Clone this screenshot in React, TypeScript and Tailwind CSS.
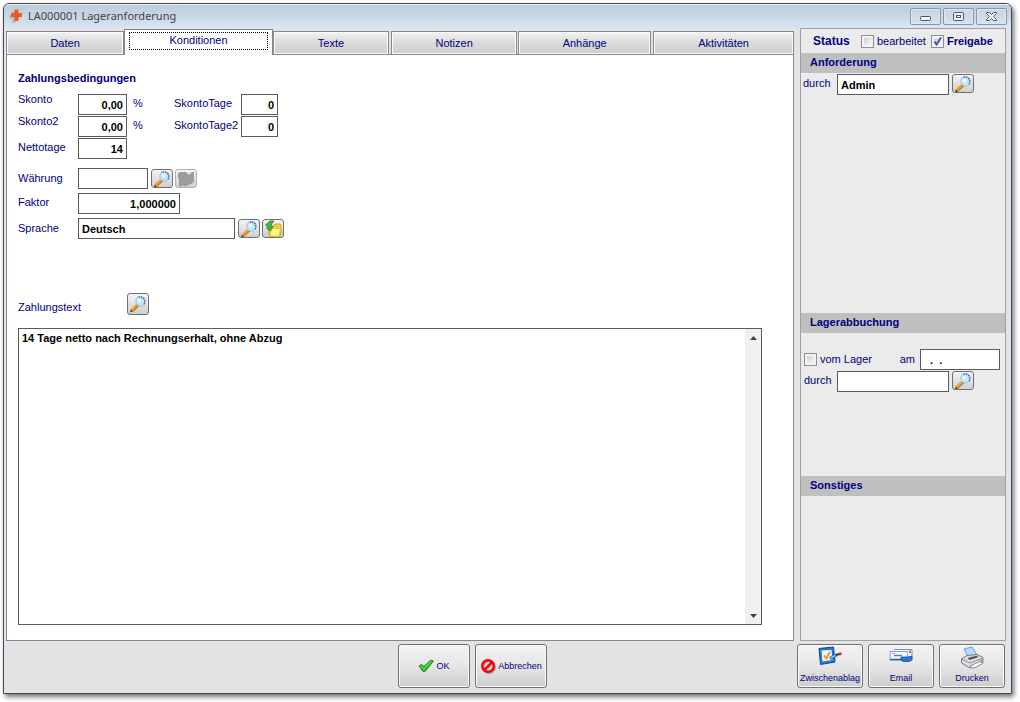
import { useState } from 'react'
import type { ReactNode } from 'react'
import clsx from 'clsx'

const tabs = [
  { id: 'daten', label: 'Daten', className: 'grow-[118]' },
  { id: 'konditionen', label: 'Konditionen', className: 'grow-[149]' },
  { id: 'texte', label: 'Texte', className: 'mr-0.5 grow-[116]' },
  { id: 'notizen', label: 'Notizen', className: 'mr-px grow-[126]' },
  { id: 'anhaenge', label: 'Anhänge', className: 'mr-0.5 grow-[133]' },
  { id: 'aktivitaeten', label: 'Aktivitäten', className: 'grow-[141]' },
]

const fieldClass = 'h-[21px] border border-[#5a5a5a] bg-white px-[3px] text-[11px] font-bold text-black outline-none'

// Icons
const SearchIcon = () => (
  <svg width="18" height="18" viewBox="0 0 18 18">
    <path d="M3.500 15.500 9 10.500" stroke="#8d6a3c" strokeWidth="2.400" strokeLinecap="round" />
    <path d="M2.800 15 8.300 9.800" stroke="#f89d1e" strokeWidth="2.600" strokeLinecap="round" />
    <path d="M1.500 15.500 3 16.800" stroke="#3a2008" strokeWidth="1.400" />
    <circle cx="11.500" cy="6.200" r="4.700" fill="#bfe8fb" stroke="#a9c6e6" strokeWidth="1.200" />
    <path d="M9.500 2.200a4.700 4.700 0 0 1 5.500 7" fill="none" stroke="#3a4c96" strokeWidth="1.200" strokeDasharray="1.500 1" />
    <circle cx="10.500" cy="5.500" r="2" fill="#e9f9ff" />
  </svg>
)

const DisabledFolderIcon = () => (
  <svg width="18" height="18" viewBox="0 0 18 18">
    <path d="M1 3l2-1h6l1 1h3l1-1h3v9l-1 2-2 1-3 1-1 1H5l-2 1-1-2V9L1 8z" fill="#9c9c9c" />
    <path d="M10 2.500 11 4h2l1-1.500" fill="none" stroke="#efefef" />
  </svg>
)

const FolderIcon = () => (
  <svg width="18" height="18" viewBox="0 0 18 18">
    <path d="M6 6h4l1-2h4.500l1.500 1v10l-2 1.500H5.500L4 12z" fill="#f4cf3c" stroke="#c09a1a" strokeWidth=".8" />
    <path d="M6 16 7.500 8.500h9L15 16.500z" fill="#fff389" stroke="#e0bc2e" strokeWidth=".8" />
    <path d="M1.500 5 6 1h4L8 3.500 6.500 6l2.500.5L6 11 2.500 8 4 6.500z" fill="#43bb3c" stroke="#1c7d22" strokeWidth=".8" />
  </svg>
)

const CheckIcon = () => (
  <svg width="16" height="14" viewBox="0 0 16 14" className="shrink-0">
    <path d="M1 7 3.500 5.500 6 7.500 12.500 1.200 15 1.500v1.200L7 12.500H5z" fill="#2fb42b" stroke="#1d8f20" />
    <path d="M2.500 7 6 10l7-7.500" fill="none" stroke="#5dd24d" strokeWidth="1.400" />
  </svg>
)

const CancelIcon = () => (
  <svg width="16" height="16" viewBox="0 0 16 16" className="shrink-0">
    <circle cx="9" cy="9" r="5.800" fill="none" stroke="#999" strokeWidth="2.200" />
    <path d="M5 13 13 5" stroke="#999" strokeWidth="2" />
    <circle cx="8" cy="8" r="5.800" fill="none" stroke="#f00" strokeWidth="2.400" />
    <path d="M4 12 12 4" stroke="#f00" strokeWidth="2.400" />
  </svg>
)

const ClipboardIcon = () => (
  <svg width="24" height="20" viewBox="0 0 24 20">
    <path d="M1 2.500 15.500 1l1.500 15L2.500 18.500z" fill="#2478d4" stroke="#0d4896" />
    <path d="M3.500 4.500 13.500 4l1 10L4.500 15.500z" fill="#f6f7fa" />
    <path d="M6 9.500 8.500 12.500 12 5.500" fill="none" stroke="#f0a31a" strokeWidth="2" />
    <path d="M12 12.500 18 9" stroke="#1c62b5" strokeWidth="3.200" />
    <path d="M12.500 12 18 9" stroke="#8cc6f4" strokeWidth="1.500" />
    <path d="M17.500 9.200 21 8" stroke="#223a70" strokeWidth="2.200" />
    <path d="M20.500 8.200 23.500 7.500" stroke="#c22f22" strokeWidth="2.600" />
  </svg>
)

const MailIcon = () => (
  <svg width="24" height="20" viewBox="0 0 24 20">
    <path d="M5 3.500h18v9h-4" fill="#eef4fb" stroke="#7c93b8" />
    <path d="M1 5.500h17.500v8.500H1z" fill="#f4f7fc" stroke="#8ba2c8" />
    <path d="M1 13.500h17.500" stroke="#2a5fb0" strokeWidth="1.500" />
    <path d="M5 9.500h8" stroke="#6d7f9d" strokeWidth="1.500" />
    <path d="M3 7.500h3" stroke="#9aabc4" />
    <path d="M12 11h7l4-1v4l-3 1.500h-6l-2-1.500z" fill="#2b79d6" stroke="#164a94" strokeWidth=".8" />
    <path d="M20 4.500h2V7h-2z" fill="#e3682a" />
  </svg>
)

const PrinterIcon = () => (
  <svg width="26" height="24" viewBox="0 0 26 24">
    <path d="M5 3 13 1l6 9.500-9 2z" fill="#b8dcfa" stroke="#6fa0d4" />
    <path d="M2.500 13 8 9.500 18 8.500l6 3v5L11 22l-8.500-5z" fill="#dedee1" stroke="#77777f" />
    <path d="M2.500 13 11 17l13-5" fill="none" stroke="#8d8d95" />
    <path d="M8.500 12 17.500 9.800l2 1.200-9 3z" fill="#4a4f5a" />
    <path d="M11 20 21 15.500l3 2L14 22.500z" fill="#fff" stroke="#85858d" />
    <path d="M21.500 14.500h1.500" stroke="#3ca23c" strokeWidth="1.500" />
  </svg>
)

const AppIcon = () => (
  <svg width="16" height="16" viewBox="0 0 16 16">
    <path d="M4 3h4v4h3v4H8v4H4v-4H1V7h3z" fill="#b9bcc0" />
    <path d="M6.500 1.500h4V5H14v4h-3.500v4h-4V9H3V5h3.500z" fill="#ea5b21" />
  </svg>
)

function IconButton({ label, disabled, tall, children }: {
  label: string
  disabled?: boolean
  tall?: boolean
  children: ReactNode
}) {
  return (
    <button
      type="button"
      aria-label={label}
      disabled={disabled}
      className={clsx(
        'flex w-[22px] shrink-0 items-center justify-center rounded-[3px] border bg-linear-to-b from-[#f4f4f4] to-[#cfcfcf]',
        tall ? 'h-[22px]' : 'h-[19px]',
        disabled ? 'border-[#b0b0b0]' : 'border-[#707070]'
      )}
    >
      {children}
    </button>
  )
}

function ActionButton({ label, icon, stacked }: { label: string; icon: ReactNode; stacked?: boolean }) {
  return (
    <button
      type="button"
      className={clsx(
        'flex h-11 shrink-0 items-center justify-center overflow-hidden rounded-[3px] border border-[#707070] bg-linear-to-b from-[#f3f3f3] from-0% via-[#e6e6e6] via-50% to-[#cdcdcd] text-[9px] leading-4 whitespace-nowrap shadow-[inset_0_0_0_1px_#fbfbfb]',
        stacked ? 'w-[66px] flex-col' : 'w-[72px] gap-0.5'
      )}
    >
      {stacked ? <span className="flex h-6 items-start">{icon}</span> : icon}
      <span>{label}</span>
    </button>
  )
}

function CheckBox({ label, defaultChecked, bold }: { label: string; defaultChecked?: boolean; bold?: boolean }) {
  return (
    <label className={clsx('flex items-center gap-[3px]', bold && 'font-bold')}>
      <span className="relative flex">
        <input
          type="checkbox"
          defaultChecked={defaultChecked}
          className="peer size-[13px] appearance-none border border-[#8e8f8f] bg-linear-to-br from-[#c4c9cf] to-white shadow-[inset_0_0_0_2px_#f4f4f4]"
        />
        <svg viewBox="0 0 13 13" className="pointer-events-none absolute inset-0 hidden size-[13px] peer-checked:block">
          <path d="M3.500 6.500 5.500 9.500 10 2.500" fill="none" stroke="#42579c" strokeWidth="2" />
        </svg>
      </span>
      {label}
    </label>
  )
}

function SectionTitle({ children }: { children: ReactNode }) {
  return <h2 className="h-5 bg-[#bfbfbf] pl-[9px] text-[11px] leading-[18px] font-bold">{children}</h2>
}

function CaptionButton({ label, children }: { label: string; children: ReactNode }) {
  return (
    <button
      type="button"
      aria-label={label}
      className="flex h-[17px] w-[31px] items-center justify-center rounded-[2px] border border-[#8496b0] bg-linear-to-b from-[#c6d5e4] to-[#d5e2ef] shadow-[inset_0_0_0_1px_#dfe9f3]"
    >
      <svg width="13" height="11" viewBox="0 0 13 11" fill="#f2f2f2" stroke="#50565f">{children}</svg>
    </button>
  )
}

export default function App() {
  const [activeTab, setActiveTab] = useState('konditionen')

  return (
    <div className="h-screen overflow-hidden bg-white pt-[3px] pr-2 pb-2 pl-[3px] font-['Liberation_Sans',Arial,sans-serif] text-[11px] text-[#000080]">
      <div className="flex h-full flex-col overflow-hidden rounded-t-md border border-[#484848] bg-[#dbe6f2] pr-1 pb-px pl-0.5 shadow-[2px_3px_5px_rgba(0,0,0,0.55)]">
        {/* Title bar */}
        <header className="-mr-1 -ml-0.5 flex h-6 shrink-0 items-center bg-linear-to-b from-[#bbcbd9] to-[#d8e5f2] pr-1 pl-1 shadow-[inset_0_1px_0_#eaf0f5]">
          <AppIcon />
          <h1 className="ml-1 grow font-['Noto_Sans',sans-serif] text-[11px] text-[#444]">LA000001 Lageranforderung</h1>
          <div className="flex gap-0.5">
            <CaptionButton label="Minimieren"><rect x="1.500" y="5.500" width="10" height="4" rx="1" /></CaptionButton>
            <CaptionButton label="Maximieren">
              <rect x="1.500" y="1.500" width="10" height="8" rx="1" />
              <rect x="4.500" y="4.500" width="4" height="2" />
            </CaptionButton>
            <CaptionButton label="Schließen">
              <path d="M1.500 1.500h3l2 2 2-2h3v1l-3 3 3 3v1h-3l-2-2-2 2h-3v-1l3-3-3-3z" />
            </CaptionButton>
          </div>
        </header>

        <div className="flex min-h-0 grow flex-col bg-[#e3e3e3]">
          <div className="flex min-h-0 grow gap-1.5 pr-px">
            <main className="flex min-w-0 grow flex-col">
              {/* Tabs */}
              <div role="tablist" className="relative z-10 -mb-px flex h-[27px] shrink-0 items-end">
                {tabs.map((tab) => {
                  const active = tab.id === activeTab
                  return (
                    <button
                      key={tab.id}
                      type="button"
                      role="tab"
                      aria-selected={active}
                      onClick={() => setActiveTab(tab.id)}
                      className={clsx(
                        'basis-0 border border-[#848894]',
                        tab.className,
                        active
                          ? 'h-[26px] border-b-0 bg-white'
                          : 'h-6 bg-linear-to-b from-[#f3f3f3] from-0% via-[#dadada] via-50% to-[#cfcfcf] shadow-[inset_0_0_0_1px_#fafafa]'
                      )}
                    >
                      {active ? (
                        <span className="mx-1 mb-1 flex h-[18px] items-center justify-center border border-dotted border-black">{tab.label}</span>
                      ) : (
                        tab.label
                      )}
                    </button>
                  )
                })}
              </div>

              <section className="flex min-h-0 grow flex-col border border-[#848894] bg-white pt-[15px] pr-[31px] pb-[15px] pl-[11px]">
                <h2 className="text-[11px] leading-4 font-bold">Zahlungsbedingungen</h2>

                <div className="mt-2 flex flex-col gap-px">
                  <div className="flex items-start">
                    <label htmlFor="skonto" className="w-[60px] leading-[10px]">Skonto</label>
                    <input id="skonto" defaultValue="0,00" className={clsx(fieldClass, 'w-[49px] text-right')} />
                    <span className="w-[47px] pl-1.5 leading-[18px]">%</span>
                    <label htmlFor="skontoTage" className="w-[67px] leading-[18px]">SkontoTage</label>
                    <input id="skontoTage" defaultValue="0" className={clsx(fieldClass, 'w-[37px] text-right')} />
                  </div>
                  <div className="flex items-start">
                    <label htmlFor="skonto2" className="w-[60px] leading-[10px]">Skonto2</label>
                    <input id="skonto2" defaultValue="0,00" className={clsx(fieldClass, 'w-[49px] text-right')} />
                    <span className="w-[47px] pl-1.5 leading-[18px]">%</span>
                    <label htmlFor="skontoTage2" className="w-[67px] leading-[18px]">SkontoTage2</label>
                    <input id="skontoTage2" defaultValue="0" className={clsx(fieldClass, 'w-[37px] text-right')} />
                  </div>
                  <div className="flex items-start">
                    <label htmlFor="nettotage" className="w-[60px] leading-[18px]">Nettotage</label>
                    <input id="nettotage" defaultValue="14" className={clsx(fieldClass, 'w-[49px] text-right')} />
                  </div>
                </div>

                <div className="mt-[9px] flex flex-col gap-1">
                  <div className="flex items-center">
                    <label htmlFor="waehrung" className="w-[60px]">Währung</label>
                    <input id="waehrung" className={clsx(fieldClass, 'mr-[3px] w-[70px]')} />
                    <div className="flex gap-0.5">
                      <IconButton label="Währung suchen"><SearchIcon /></IconButton>
                      <IconButton label="Währung öffnen" disabled><DisabledFolderIcon /></IconButton>
                    </div>
                  </div>
                  <div className="flex items-start">
                    <label htmlFor="faktor" className="w-[60px] leading-[18px]">Faktor</label>
                    <input id="faktor" defaultValue="1,000000" className={clsx(fieldClass, 'w-[102px] text-right')} />
                  </div>
                  <div className="flex items-center">
                    <label htmlFor="sprache" className="w-[60px]">Sprache</label>
                    <input id="sprache" defaultValue="Deutsch" className={clsx(fieldClass, 'mr-[3px] w-[157px]')} />
                    <div className="flex gap-0.5">
                      <IconButton label="Sprache suchen"><SearchIcon /></IconButton>
                      <IconButton label="Sprache öffnen"><FolderIcon /></IconButton>
                    </div>
                  </div>
                </div>

                <div className="mt-[54px] flex items-end">
                  <label htmlFor="zahlungstext" className="w-[109px] leading-4">Zahlungstext</label>
                  <IconButton label="Zahlungstext suchen" tall><SearchIcon /></IconButton>
                </div>

                <div className="mt-[13px] flex min-h-0 grow border border-[#5a5a5a]">
                  <textarea
                    id="zahlungstext"
                    defaultValue="14 Tage netto nach Rechnungserhalt, ohne Abzug"
                    className="min-w-0 grow resize-none overflow-hidden px-[3px] py-px text-[11px] leading-4 font-bold text-black outline-none"
                  />
                  <div className="flex w-4 flex-col justify-between bg-[#f0f0f0]">
                    <button type="button" aria-label="Nach oben" className="flex h-[17px] items-center justify-center">
                      <svg width="7" height="4" viewBox="0 0 7 4"><path d="M0 4 3.500 0 7 4z" fill="#404040" /></svg>
                    </button>
                    <button type="button" aria-label="Nach unten" className="flex h-[17px] items-center justify-center">
                      <svg width="7" height="4" viewBox="0 0 7 4"><path d="M0 0 3.500 4 7 0z" fill="#404040" /></svg>
                    </button>
                  </div>
                </div>
              </section>
            </main>

            {/* Status column */}
            <aside className="flex w-[206px] shrink-0 flex-col border border-[#a0a0a0] bg-[#ebebeb]">
              <div className="flex h-6 items-center pl-3">
                <span className="w-12 text-[12px] font-bold">Status</span>
                <div className="flex gap-[5px]">
                  <CheckBox label="bearbeitet" />
                  <CheckBox label="Freigabe" defaultChecked bold />
                </div>
              </div>

              <section className="h-[260px]">
                <SectionTitle>Anforderung</SectionTitle>
                <div className="mt-px flex items-start pl-0.5">
                  <label htmlFor="angefordertDurch" className="w-[34px] leading-[18px]">durch</label>
                  <input id="angefordertDurch" defaultValue="Admin" className={clsx(fieldClass, 'mr-[3px] w-28')} />
                  <IconButton label="Anforderer suchen"><SearchIcon /></IconButton>
                </div>
              </section>

              <section className="h-[163px]">
                <SectionTitle>Lagerabbuchung</SectionTitle>
                <div className="mt-4 flex items-center pl-[3px]">
                  <CheckBox label="vom Lager" />
                  <label htmlFor="abbuchungAm" className="mr-[5px] ml-auto">am</label>
                  <input id="abbuchungAm" defaultValue="  .  ." className={clsx(fieldClass, 'mr-[5px] w-20')} />
                </div>
                <div className="mt-px flex items-start pl-[3px]">
                  <label htmlFor="abgebuchtDurch" className="w-[33px] leading-[18px]">durch</label>
                  <input id="abgebuchtDurch" className={clsx(fieldClass, 'mr-[3px] w-28')} />
                  <IconButton label="Lagerist suchen"><SearchIcon /></IconButton>
                </div>
              </section>

              <section>
                <SectionTitle>Sonstiges</SectionTitle>
              </section>
            </aside>
          </div>

          {/* Actions */}
          <footer className="flex h-[51px] shrink-0 pt-[3px] pr-0.5">
            <div className="grow-[392]" />
            <div className="flex gap-[5px]">
              <ActionButton label="OK" icon={<CheckIcon />} />
              <ActionButton label="Abbrechen" icon={<CancelIcon />} />
            </div>
            <div className="grow-[250]" />
            <div className="flex gap-[5px]">
              <ActionButton label="Zwischenablag" icon={<ClipboardIcon />} stacked />
              <ActionButton label="Email" icon={<MailIcon />} stacked />
              <ActionButton label="Drucken" icon={<PrinterIcon />} stacked />
            </div>
          </footer>
        </div>
      </div>
    </div>
  )
}
